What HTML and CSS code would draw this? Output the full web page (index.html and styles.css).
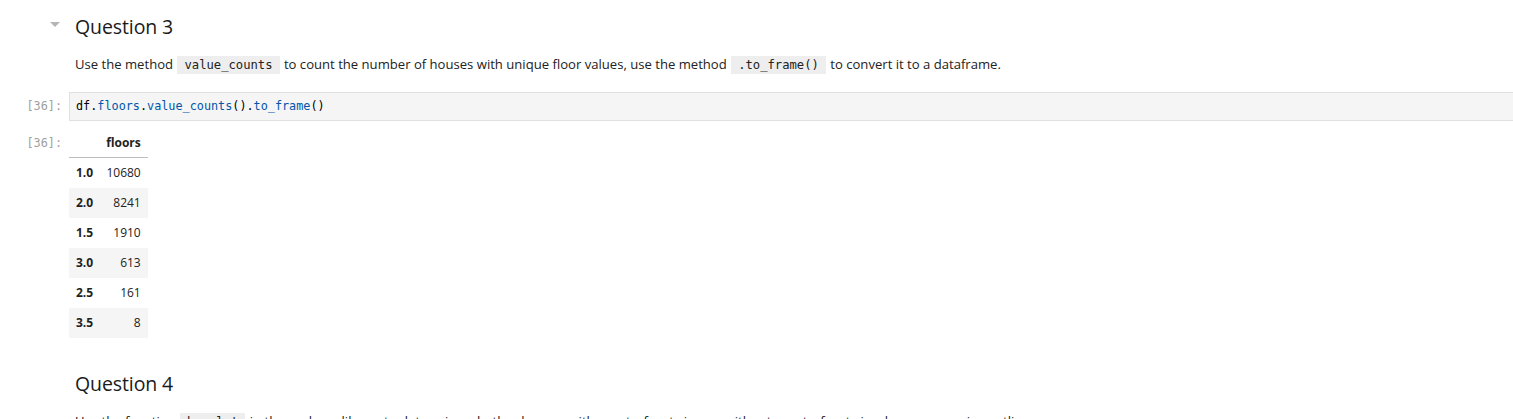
FILE: index.html
```html
<!DOCTYPE html>
<html>
<head>
<meta charset="utf-8">
<link rel="stylesheet" href="styles.css">
</head>
<body>
<div class="notebook">
  <div class="cell md">
    <div class="prompt heading-prompt"><span class="caret"></span></div>
    <div class="content">
      <h2 class="heading">Question 3</h2>
      <p class="para">Use the method <code class="ic">value_counts</code> to count the number of houses with unique floor values, use the method <code class="ic">.to_frame()</code> to convert it to a dataframe.</p>
    </div>
  </div>

  <div class="cell code">
    <div class="prompt mono">[36]:</div>
    <div class="editor mono"><span class="v">df</span>.<span class="p">floors</span>.<span class="p">value_counts</span>().<span class="p">to_frame</span>()</div>
  </div>

  <div class="cell output">
    <div class="prompt mono out-prompt">[36]:</div>
    <div class="content">
      <table class="df">
        <thead>
          <tr><th></th><th>floors</th></tr>
        </thead>
        <tbody>
          <tr><th>1.0</th><td>10680</td></tr>
          <tr><th>2.0</th><td>8241</td></tr>
          <tr><th>1.5</th><td>1910</td></tr>
          <tr><th>3.0</th><td>613</td></tr>
          <tr><th>2.5</th><td>161</td></tr>
          <tr><th>3.5</th><td>8</td></tr>
        </tbody>
      </table>
    </div>
  </div>

  <div class="cell md q4">
    <div class="prompt"></div>
    <div class="content">
      <h2 class="heading">Question 4</h2>
      <p class="para">Use the function <code class="ic">boxplot</code> in the seaborn library to determine whether houses with a waterfront view or without a waterfront view have more price outliers.</p>
    </div>
  </div>
</div>
</body>
</html>
```

FILE: styles.css
```css
html, body {
  margin: 0;
  padding: 0;
  background: #ffffff;
  overflow: hidden;
}

body {
  font-family: "Open Sans", "Noto Sans", sans-serif;
  color: rgba(0, 0, 0, 0.87);
  width: 1513px;
  height: 419px;
}

.mono {
  font-family: "DejaVu Sans Mono", "Liberation Mono", monospace;
}

.cell {
  display: flex;
  align-items: flex-start;
}

.prompt {
  flex: 0 0 69px;
  box-sizing: border-box;
  padding-right: 7px;
  text-align: right;
  color: #9e9e9e;
  font-size: 11.8px;
}

.content {
  flex: 1;
  padding-left: 6px;
}

.heading-prompt {
  display: flex;
  justify-content: flex-end;
  padding-right: 9px;
  padding-top: 22px;
}

.caret {
  width: 0;
  height: 0;
  border-left: 5px solid transparent;
  border-right: 5px solid transparent;
  border-top: 5px solid #b5b5b5;
}

.heading {
  margin: 13px 0 0 0;
  font-size: 19.5px;
  font-weight: 500;
  line-height: 28px;
  color: #1a1a1a;
  letter-spacing: -0.1px;
}

.para {
  margin: 13px 0 0 0;
  font-size: 13.1px;
  line-height: 20px;
  color: #222;
}

.ic {
  font-family: "DejaVu Sans Mono", "Liberation Mono", monospace;
  font-size: 12.2px;
  background: #eeeeee;
  padding: 2px 7px;
  margin: 0 1px;
  color: #222;
}

.code {
  margin-top: 17px;
}

.code .prompt {
  line-height: 29px;
}

.editor {
  flex: 1;
  height: 29px;
  box-sizing: border-box;
  background: #f5f5f5;
  border-top: 1px solid #e0e0e0;
  border-bottom: 1px solid #e0e0e0;
  border-left: 1px solid #e0e0e0;
  padding-left: 6px;
  font-size: 11.8px;
  line-height: 27px;
  color: #000;
}

.editor .p { color: #0055aa; }
.editor .v { color: #000; }

.output {
  margin-top: 8px;
}

.out-prompt {
  line-height: 28px;
}

.output .content {
  padding-left: 0;
}

.df {
  border-collapse: collapse;
  font-size: 12px;
  color: #222;
}

.df th, .df td {
  padding: 0 7px;
  height: 30px;
  line-height: 18px;
  text-align: right;
  vertical-align: middle;
}

.df thead th {
  font-weight: bold;
  height: 28px;
  border-bottom: 1px solid #bdbdbd;
}

.df tbody th {
  font-weight: bold;
  padding-left: 7px;
  padding-right: 6px;
  text-align: left;
}

.df tbody tr:nth-child(even) {
  background: #f5f5f5;
}

.q4 {
  margin-top: 32px;
}

.q4 .heading {
  margin-top: 0;
}
```
